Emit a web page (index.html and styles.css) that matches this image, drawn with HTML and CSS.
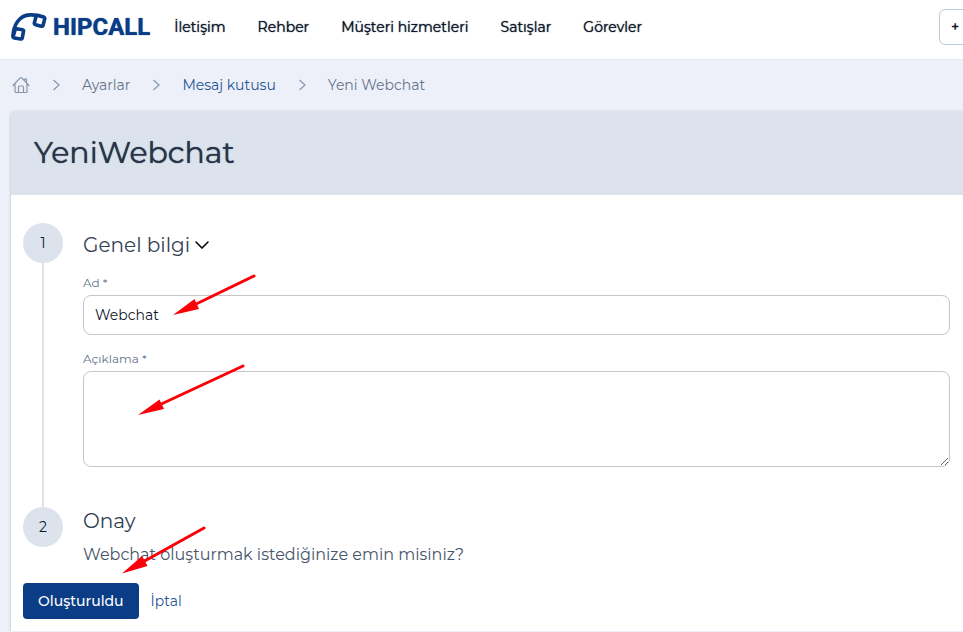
FILE: index.html
```html
<!DOCTYPE html>
<html lang="tr">

<head>
    <meta charset="UTF-8">
    <meta name="viewport" content="width=device-width, initial-scale=1.0">
    <title>Yeni Webchat - Hipcall</title>
    <link rel="stylesheet" href="styles.css">
</head>

<body>
    <!-- Top bar -->
    <header class="topbar">
        <a class="logo" href="#">
            <svg class="logo-icon" width="36" height="29" viewBox="0 0 36 29" fill="none" stroke="currentColor" stroke-width="3.6" stroke-linejoin="round" stroke-linecap="round">
                <path d="M5.6 15.8L11.4 16.7Q12.8 17 12.5 18.4L11.3 24.8Q11 26.3 9.6 26L3.4 24.9Q1.8 24.6 1.9 23C2.6 13 7.5 2.3 19 1.9C24.5 1.7 28.7 2.6 32.7 4Q34.1 4.5 33.7 5.9L32.1 12.2Q31.7 13.6 30.3 13.2L24.6 11.7Q23 11.3 23.4 9.7L25 3.6" />
                <path d="M5.6 15.8Q4.3 15.7 4 17L2.6 22" />
            </svg>
            <span>HIPCALL</span>
        </a>
        <nav class="nav">
            <a href="#">İletişim</a>
            <a href="#">Rehber</a>
            <a href="#">Müşteri hizmetleri</a>
            <a href="#">Satışlar</a>
            <a href="#">Görevler</a>
        </nav>
        <button class="add-btn" type="button">+</button>
    </header>

    <!-- Breadcrumb -->
    <nav class="breadcrumb">
        <a class="home" href="#" aria-label="Ana sayfa">
            <svg width="18" height="18" viewBox="0 0 18 18" fill="none" stroke="currentColor" stroke-width="1.2" stroke-linejoin="round" stroke-linecap="round">
                <path d="M1 9.5L8 2.1Q9 1.2 10 2.1L17 9.5M3 7.6V15.5Q3 16.5 4 16.5H14Q15 16.5 15 15.5V7.6M6.5 16.5V11Q6.5 10 7.5 10H10.5Q11.5 10 11.5 11V16.5M12.5 4.5V3H14.5V6.8" />
            </svg>
        </a>
        <svg class="sep" width="8" height="12" viewBox="0 0 8 12"><path d="M1.5 1L7 6L1.5 11" /></svg>
        <a href="#">Ayarlar</a>
        <svg class="sep" width="8" height="12" viewBox="0 0 8 12"><path d="M1.5 1L7 6L1.5 11" /></svg>
        <a class="active" href="#">Mesaj kutusu</a>
        <svg class="sep" width="8" height="12" viewBox="0 0 8 12"><path d="M1.5 1L7 6L1.5 11" /></svg>
        <span>Yeni Webchat</span>
    </nav>

    <!-- Form card -->
    <main class="card">
        <div class="card-header">
            <h1>YeniWebchat</h1>
        </div>
        <form class="card-body">
            <section class="step step-line">
                <div class="step-number">1</div>
                <div class="step-content">
                    <h2>Genel bilgi
                        <svg width="14" height="8" viewBox="0 0 14 8" fill="none" stroke="#000" stroke-width="1.5" stroke-linecap="round"><path d="M1 1L7 7L13 1" /></svg>
                    </h2>
                    <label for="name">Ad *</label>
                    <input id="name" type="text" value="Webchat">
                    <label for="description">Açıklama *</label>
                    <textarea id="description"></textarea>
                </div>
            </section>
            <section class="step">
                <div class="step-number">2</div>
                <div class="step-content">
                    <h2>Onay</h2>
                    <p>Webchat oluşturmak istediğinize emin misiniz?</p>
                </div>
            </section>
            <div class="actions">
                <button class="submit-btn" type="button">Oluşturuldu</button>
                <a href="#">İptal</a>
            </div>
        </form>

        <!-- Arrows pointing at the fields and the button -->
        <svg class="arrows" width="260" height="480" viewBox="11 111 260 480" fill="#fb0007" stroke="#fb0007" aria-hidden="true">
            <path d="M254 276L192 306M243 366L157 406M204 528L141 563" stroke-width="3" stroke-linecap="round" />
            <path d="M173 315L194.5 299L199 309ZM138 415L159.5 399.5L164 409ZM122 573.5L142 556L147.5 566Z" stroke="none" />
        </svg>
    </main>
</body>

</html>
```
FILE: styles.css
```css
* {
    box-sizing: border-box;
}

body {
    margin: 0;
    background-color: #edf0f9;
    color: #0f172a;
    font-family: Montserrat, Inter, "Liberation Sans", sans-serif;
    font-size: 14px;
    line-height: 20px;
    overflow-x: hidden;
}

a {
    color: inherit;
    text-decoration: none;
}

h1,
h2,
p {
    margin: 0;
}

/* Top bar */
.topbar {
    display: flex;
    align-items: center;
    height: 60px;
    padding: 0 0 5px 11px;
    background-color: #fff;
    border-bottom: 1px solid #e2e8f0;
    overflow: hidden;
}

.logo {
    display: flex;
    align-items: center;
    gap: 6px;
    color: #0a3d86;
    font-family: Roboto, sans-serif;
    font-size: 24px;
    font-weight: 700;
    text-shadow: 0 0 1px currentColor;
}

.nav {
    display: flex;
    flex: 1;
    gap: 32px;
    margin-left: 24px;
    text-shadow: 0 0 1px currentColor;
    white-space: nowrap;
}

.add-btn {
    flex: none;
    width: 36px;
    height: 36px;
    margin-right: -12px;
    padding: 0 0 0 11px;
    background-color: #fff;
    border: 1px solid #bccbdc;
    border-radius: 6px;
    color: #0f172a;
    font: inherit;
    font-weight: 600;
    text-align: left;
}

/* Breadcrumb */
.breadcrumb {
    display: flex;
    align-items: center;
    height: 51px;
    padding: 0 0 2px 12px;
    color: #64748b;
}

.home {
    display: flex;
    color: #8795aa;
}

.breadcrumb .active {
    color: #1f5597;
}

.sep {
    margin: 0 22px;
    fill: none;
    stroke: #8795aa;
    stroke-width: 1.2;
}

/* Card */
.card {
    position: relative;
    margin-left: 11px;
    background-color: #fff;
    border-radius: 4px 0 0 0;
    box-shadow: 0 1px 3px rgba(0, 0, 0, 0.25);
}

.card-header {
    padding: 24px 23px;
    background-color: #dce3ec;
    border-radius: 4px 0 0 0;
}

.card-header h1 {
    color: #273449;
    font-size: 30px;
    font-weight: 400;
    line-height: 36px;
    text-shadow: 0 0 1px currentColor;
}

.card-body {
    padding: 28px 13px 12px 12px;
}

.step {
    display: flex;
    gap: 20px;
    position: relative;
}

.step-line {
    padding-bottom: 40px;
    background: linear-gradient(#dce3ec, #dce3ec) 19px 0 / 2px 100% no-repeat;
}

.step-number {
    flex: none;
    width: 40px;
    height: 40px;
    background-color: #dce3ec;
    border-radius: 50%;
    line-height: 40px;
    text-align: center;
}

.step-content {
    flex: 1;
}

.step h2 {
    display: flex;
    align-items: center;
    gap: 5px;
    color: #334155;
    font-size: 20px;
    font-weight: 400;
    line-height: 28px;
}

.step-line h2 {
    padding-top: 8px;
    margin-bottom: 16px;
}

.step label {
    display: block;
    margin-bottom: 4px;
    color: #64748b;
    font-size: 12px;
    line-height: 16px;
}

.step input,
.step textarea {
    display: block;
    width: 100%;
    height: 40px;
    margin-bottom: 16px;
    padding: 8px 11px;
    background-color: #fff;
    border: 1px solid #c6c6c6;
    border-radius: 8px;
    color: #0f172a;
    font: inherit;
}

.step textarea {
    height: 96px;
    margin-bottom: 0;
    resize: vertical;
}

.step p {
    padding: 8px 0;
    color: #475569;
    font-size: 16px;
    line-height: 24px;
}

.actions {
    display: flex;
    align-items: center;
    gap: 12px;
    padding-top: 8px;
    color: #1f5597;
}

.submit-btn {
    height: 36px;
    padding: 0 15px;
    background-color: #0a3d86;
    border: none;
    border-radius: 4px;
    color: #fff;
    font: inherit;
    font-weight: 500;
}

.arrows {
    position: absolute;
    top: 0;
    left: 0;
    pointer-events: none;
}
```
